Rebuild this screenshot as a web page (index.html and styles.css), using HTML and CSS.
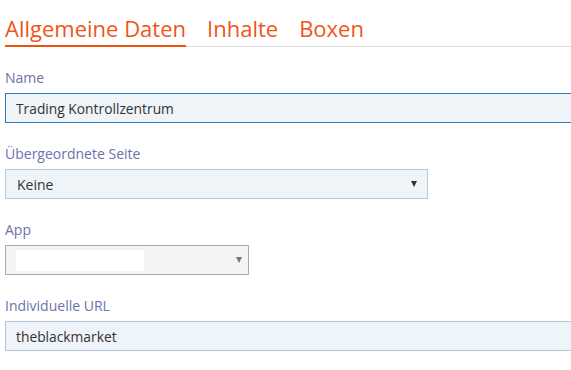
FILE: index.html
```html
<!DOCTYPE html>
<html lang="de">
<head>
  <meta charset="UTF-8">
  <title>Seite bearbeiten</title>
  <link rel="stylesheet" href="styles.css">
</head>
<body>
  <div class="page">
    <div class="tabs">
      <a class="tab active">Allgemeine Daten</a>
      <a class="tab">Inhalte</a>
      <a class="tab">Boxen</a>
    </div>

    <div class="field">
      <label for="name">Name</label>
      <input type="text" id="name" class="text-input focused" value="Trading Kontrollzentrum">
    </div>

    <div class="field">
      <label>Übergeordnete Seite</label>
      <div class="select select-parent">
        <span class="select-value">Keine</span>
        <span class="arrow"></span>
      </div>
    </div>

    <div class="field">
      <label>App</label>
      <div class="select select-app">
        <span class="blank"></span>
        <span class="arrow"></span>
      </div>
    </div>

    <div class="field">
      <label for="url">Individuelle URL</label>
      <input type="text" id="url" class="text-input" value="theblackmarket">
    </div>
  </div>
</body>
</html>
```

FILE: styles.css
```css
html, body {
  margin: 0;
  padding: 0;
  background: #fff;
}
body {
  font-family: 'Open Sans', 'Segoe UI', sans-serif;
  color: #333;
}
.page {
  padding-left: 5px;
  overflow: hidden;
}
.tabs {
  display: flex;
  gap: 21px;
  height: 46px;
  border-bottom: 1px solid #dcdcdc;
  margin-bottom: 22px;
}
.tab {
  font-size: 22px;
  line-height: 30px;
  padding-top: 13px;
  color: #ee561a;
  cursor: pointer;
}
.tab.active {
  border-bottom: 2px solid #ee5409;
  margin-bottom: -1px;
}
.field {
  margin-bottom: 22px;
}
.field label {
  display: block;
  font-size: 14px;
  line-height: 18px;
  color: #6d73aa;
  margin-bottom: 6px;
}
.text-input {
  display: block;
  box-sizing: border-box;
  width: 100%;
  height: 30px;
  padding: 0 10px;
  border: 1px solid #adc6de;
  border-right: 0;
  background: #eff4f9;
  font-family: inherit;
  font-size: 13.8px;
  color: #333;
  outline: none;
}
.text-input.focused {
  border-color: #2b7cc0;
}
.select {
  box-sizing: border-box;
  height: 30px;
  display: flex;
  align-items: center;
  justify-content: space-between;
  font-size: 14px;
  cursor: pointer;
}
.select-parent {
  width: 423px;
  border: 1px solid #b5c8dc;
  background: #eff4f9;
  padding: 0 10px 0 11px;
}
.select-app {
  width: 244px;
  border: 1px solid #ababab;
  background: #f3f3f3;
  padding: 0 6px 0 10px;
}
.blank {
  width: 128px;
  height: 21px;
  background: #fff;
}
.arrow {
  width: 0;
  height: 0;
  border-left: 3.5px solid transparent;
  border-right: 3.5px solid transparent;
  border-top: 6px solid #333;
}
.select-app .arrow {
  border-top-color: #737b5c;
}
```
